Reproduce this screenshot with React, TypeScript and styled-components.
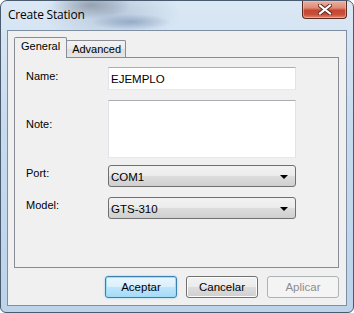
import styled, { createGlobalStyle } from "styled-components";

const GlobalStyle = createGlobalStyle`
  html, body {
    margin: 0;
    padding: 0;
    width: 354px;
    height: 313px;
    overflow: hidden;
    background: #ffffff;
  }
  * {
    box-sizing: border-box;
  }
`;

const Window = styled.div`
  width: 354px;
  height: 313px;
  display: flex;
  flex-direction: column;
  padding: 0 6px 6px 6px;
  border: 1px solid #4a5b70;
  border-radius: 7px 7px 6px 6px;
  background:
    radial-gradient(ellipse 40px 14px at 90px 4px, rgba(110, 120, 135, 0.55), transparent),
    radial-gradient(ellipse 40px 8px at 130px 21px, rgba(90, 120, 160, 0.45), transparent),
    radial-gradient(ellipse 70px 30px at 110px 12px, rgba(150, 170, 195, 0.5), transparent),
    linear-gradient(180deg, #dbe8f5 0%, #c7dbef 40%, #bcd3ea 100%);
  font-family: "Liberation Sans", Arial, sans-serif;
  font-size: 11px;
  color: #000;
`;

const TitleBar = styled.div`
  height: 29px;
  display: flex;
  align-items: flex-start;
`;

const Title = styled.span`
  font-family: "Open Sans", "Liberation Sans", sans-serif;
  font-size: 12px;
  line-height: 28px;
  padding-left: 1px;
  color: #000;
  letter-spacing: -0.2px;
`;

const CloseButton = styled.div`
  margin-left: auto;
  width: 45px;
  height: 18px;
  border: 1px solid #5d2a22;
  border-top: none;
  border-radius: 0 0 4px 4px;
  background: linear-gradient(180deg, #eab0a0 0%, #dd8c78 40%, #c6452f 55%, #c9503a 80%, #e08a6f 100%);
  display: flex;
  align-items: center;
  justify-content: center;
  box-shadow: inset 0 0 0 1px rgba(255, 200, 190, 0.5);
`;

const Client = styled.div`
  flex: 1;
  display: flex;
  flex-direction: column;
  background: #f0f0f0;
  border: 1px solid #7e8fa3;
  padding: 6px 7px 7px 6px;
`;

const TabStrip = styled.div`
  display: flex;
  align-items: flex-end;
  height: 21px;
  margin-bottom: -1px;
  position: relative;
  z-index: 1;
`;

const Tab = styled.div<{ $active?: boolean }>`
  height: ${(p) => (p.$active ? "21px" : "17px")};
  margin-bottom: ${(p) => (p.$active ? "0" : "1px")};
  margin-left: ${(p) => (p.$active ? "0" : "-1px")};
  padding: ${(p) => (p.$active ? "0 6px 3px 6px" : "0 4px 0 5px")};
  border: 1px solid #898c95;
  border-bottom: none;
  border-radius: 2px 2px 0 0;
  background: ${(p) =>
    p.$active ? "#f0f0f0" : "linear-gradient(180deg, #f3f3f3 0%, #ebebeb 50%, #dedede 51%, #e6e6e6 100%)"};
  display: flex;
  align-items: center;
  font-size: 11px;
  line-height: 1;
  position: relative;
  z-index: ${(p) => (p.$active ? 2 : 1)};
`;

const Panel = styled.div`
  flex: 1;
  border: 1px solid #898c95;
  background: #f0f0f0;
  padding: 9px 0 0 11px;
`;

const Row = styled.div<{ $top: number }>`
  display: grid;
  grid-template-columns: 82px 188px;
  margin-top: ${(p) => p.$top}px;
`;

const Label = styled.label<{ $lift: number }>`
  align-self: center;
  padding-bottom: ${(p) => p.$lift}px;
  font-size: 11px;
  color: #000;
`;

const TextBox = styled.div<{ $height: number }>`
  height: ${(p) => p.$height}px;
  background: #fff;
  border: 1px solid #dbdfe6;
  border-top-color: #abadb3;
  border-left-color: #e2e3ea;
  border-right-color: #e2e3ea;
  border-bottom-color: #e3e9ef;
  padding: 5px 0 0 2px;
  font-size: 11.5px;
  line-height: 13px;
`;

const Combo = styled.div`
  height: 22px;
  border: 1px solid #707070;
  border-radius: 3px;
  background: linear-gradient(180deg, #f2f2f2 0%, #ebebeb 50%, #dddddd 51%, #cfcfcf 100%);
  display: flex;
  align-items: center;
  padding: 2px 7px 0 2px;
  font-size: 11.5px;
`;

const ComboText = styled.span`
  flex: 1;
`;

const Arrow = styled.span`
  width: 0;
  height: 0;
  border-left: 4px solid transparent;
  border-right: 4px solid transparent;
  border-top: 4px solid #000;
`;

const ButtonRow = styled.div`
  display: flex;
  justify-content: flex-end;
  gap: 9px;
  margin-top: 8px;
`;

const Button = styled.div<{ $variant?: "default" | "normal" | "disabled" }>`
  width: 72px;
  height: 22px;
  border-radius: 3px;
  display: flex;
  align-items: center;
  justify-content: center;
  font-size: 11.5px;
  border: 1px solid
    ${(p) => (p.$variant === "default" ? "#3c7fb1" : p.$variant === "disabled" ? "#adb2b5" : "#707070")};
  color: ${(p) => (p.$variant === "disabled" ? "#8d8d8d" : "#000")};
  background: ${(p) =>
    p.$variant === "default"
      ? "linear-gradient(180deg, #eaf6fd 0%, #d9f0fc 50%, #bee6fd 51%, #a7d9f5 100%)"
      : p.$variant === "disabled"
      ? "#f4f4f4"
      : "linear-gradient(180deg, #f2f2f2 0%, #ebebeb 50%, #dddddd 51%, #cfcfcf 100%)"};
  box-shadow: ${(p) =>
    p.$variant === "default"
      ? "inset 0 0 0 1px #9fdcf6, 0 0 2px #7fc8ee"
      : p.$variant === "disabled"
      ? "none"
      : "inset 0 0 0 1px #fcfcfc"};
`;

const CloseIcon = () => (
  <svg width="14" height="11" viewBox="0 0 14 11">
    <path d="M2 1.5 L12 9.5 M12 1.5 L2 9.5" stroke="#5a2018" strokeWidth="4" strokeLinecap="square" />
    <path d="M2 1.5 L12 9.5 M12 1.5 L2 9.5" stroke="#ffffff" strokeWidth="2.2" strokeLinecap="square" />
  </svg>
);

export default function App() {
  return (
    <>
      <GlobalStyle />
      <Window>
        <TitleBar>
          <Title>Create Station</Title>
          <CloseButton>
            <CloseIcon />
          </CloseButton>
        </TitleBar>
        <Client>
          <TabStrip>
            <Tab $active>General</Tab>
            <Tab>Advanced</Tab>
          </TabStrip>
          <Panel>
            <Row $top={0}>
              <Label $lift={6}>Name:</Label>
              <TextBox $height={23}>EJEMPLO</TextBox>
            </Row>
            <Row $top={10}>
              <Label $lift={10}>Note:</Label>
              <TextBox $height={58} />
            </Row>
            <Row $top={7}>
              <Label $lift={7}>Port:</Label>
              <Combo>
                <ComboText>COM1</ComboText>
                <Arrow />
              </Combo>
            </Row>
            <Row $top={10}>
              <Label $lift={7}>Model:</Label>
              <Combo>
                <ComboText>GTS-310</ComboText>
                <Arrow />
              </Combo>
            </Row>
          </Panel>
          <ButtonRow>
            <Button $variant="default">Aceptar</Button>
            <Button $variant="normal">Cancelar</Button>
            <Button $variant="disabled">Aplicar</Button>
          </ButtonRow>
        </Client>
      </Window>
    </>
  );
}
